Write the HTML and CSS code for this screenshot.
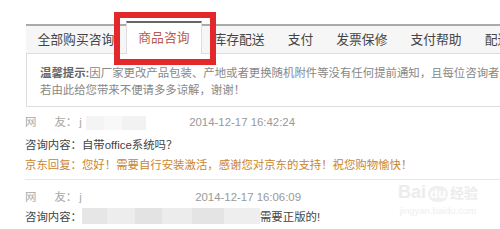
FILE: index.html
```html
<!DOCTYPE html>
<html lang="zh-CN">
<head>
<meta charset="utf-8">
<title>商品咨询</title>
<link rel="stylesheet" href="styles.css">
</head>
<body>
<div class="page">
  <div class="tabs">
    <div class="tab">全部购买咨询</div>
    <div class="tab active">商品咨询</div>
    <div class="tab">库存配送</div>
    <div class="tab">支付</div>
    <div class="tab">发票保修</div>
    <div class="tab">支付帮助</div>
    <div class="tab">配送帮助</div>
    <div class="tab">其他</div>
  </div>
  <div class="notice">
    <div class="nline"><b>温馨提示:</b>因厂家更改产品包装、产地或者更换随机附件等没有任何提前通知，且每位咨询者购买情况、提问时间等不同，为此以下回复仅对提问者3天内有效，其他网友仅供参考！</div>
    <div class="nline">若由此给您带来不便请多多谅解，谢谢！</div>
  </div>
  <div class="item">
    <div class="row user first"><span class="lbl">网<span class="gap"></span>友：</span><span class="nick n1">j<span class="blur b1"></span></span><span class="date">2014-12-17 16:42:24</span></div>
    <div class="row ask"><span class="lbl">咨询内容：</span>自带office系统吗？</div>
    <div class="row reply"><span class="lbl">京东回复：</span>您好！需要自行安装激活，感谢您对京东的支持！祝您购物愉快！</div>
  </div>
  <div class="item">
    <div class="row user"><span class="lbl">网<span class="gap"></span>友：</span><span class="nick n2">j</span><span class="date">2014-12-17 16:06:09</span></div>
    <div class="row ask"><span class="lbl">咨询内容：</span><span class="blur b2"></span>需要正版的!</div>
  </div>
</div>
<div class="highlight"></div>
<div class="watermark">
  <div class="wm-logo"><span class="wm-bai">Bai</span><span class="wm-du">du</span><span class="wm-jy">经验</span></div>
  <div class="wm-url">jingyan.baidu.com</div>
</div>
</body>
</html>
```

FILE: styles.css
```css
html, body {
  margin: 0;
  padding: 0;
  overflow: hidden;
  background: #fff;
}
body {
  width: 500px;
  height: 229px;
  position: relative;
  font-family: "Liberation Sans", "Noto Sans CJK SC", sans-serif;
  font-size: 11.4px;
  color: #333;
}
.page {
  width: 760px;
  padding: 24px 0 0 25px;
}
.tabs {
  display: flex;
  margin-left: 1px;
  height: 27px;
  border-top: 2px solid #aaa;
  border-bottom: 1px solid #ddd;
  background: #f6f6f6;
  white-space: nowrap;
}
.tab {
  padding: 0 11.5px;
  line-height: 27px;
  font-size: 12.8px;
  color: #444;
}
.tab.active {
  margin-top: -5px;
  height: 31px;
  line-height: 30px;
  margin-bottom: -1px;
  background: #fff;
  border-top: 2px solid #666;
  border-left: 1px solid #ddd;
  border-right: 1px solid #ddd;
  color: #b95a50;
}
.notice {
  margin-left: 1px;
  border-left: 1px solid #ddd;
  border-bottom: 1px solid #ddd;
  padding: 11px 0 7px 13px;
  color: #888;
}
.nline {
  line-height: 17px;
  white-space: nowrap;
}
.nline b {
  color: #666;
  font-weight: bold;
}
.item {
  padding: 5px 0 4px;
  border-bottom: 1px solid #e8e8e8;
}
.item + .item {
  border-bottom: none;
  padding-top: 7px;
}
.row {
  line-height: 20px;
  white-space: nowrap;
}
.row.first {
  margin-bottom: 3px;
}
.user {
  color: #a8a8a8;
}
.gap {
  display: inline-block;
  width: 18px;
}
.nick {
  display: inline-block;
  padding-left: 2px;
}
.n1 { width: 110px; }
.n2 { width: 116px; }
.date {
  color: #999;
}
.ask {
  color: #444;
}
.reply {
  color: #c98630;
}
.blur {
  display: inline-block;
  vertical-align: middle;
}
.b1 {
  width: 60px;
  height: 14px;
  margin-left: 4px;
  background: linear-gradient(90deg, #f4f4f4 0 30%, #f8f8f8 30% 60%, #f2f2f2 60%);
}
.b2 {
  width: 178px;
  height: 16px;
  margin-top: -3px;
  background: linear-gradient(90deg, #e6e6e6 0 14%, #ededed 14% 30%, #e3e3e3 30% 45%, #ececec 45% 62%, #e4e4e4 62% 80%, #eeeeee 80%);
}
.highlight {
  position: absolute;
  left: 114px;
  top: 12px;
  width: 102px;
  height: 53px;
  box-sizing: border-box;
  border: 6px solid #e3282c;
}
.watermark {
  position: absolute;
  left: 398px;
  top: 181px;
  color: #ececec;
  text-align: center;
}
.wm-logo {
  font-family: "Liberation Sans", "Noto Sans CJK SC", sans-serif;
  font-size: 18px;
  font-weight: bold;
  line-height: 22px;
}
.wm-du {
  display: inline-block;
  font-size: 13px;
  line-height: 16px;
  padding: 0 2px;
  border-radius: 8px;
  background: #f0f0f0;
  color: #fff;
  margin: 0 2px;
}
.wm-jy {
  font-size: 14px;
}
.wm-url {
  font-size: 9.5px;
  line-height: 14px;
  color: #eeeeee;
}
```
